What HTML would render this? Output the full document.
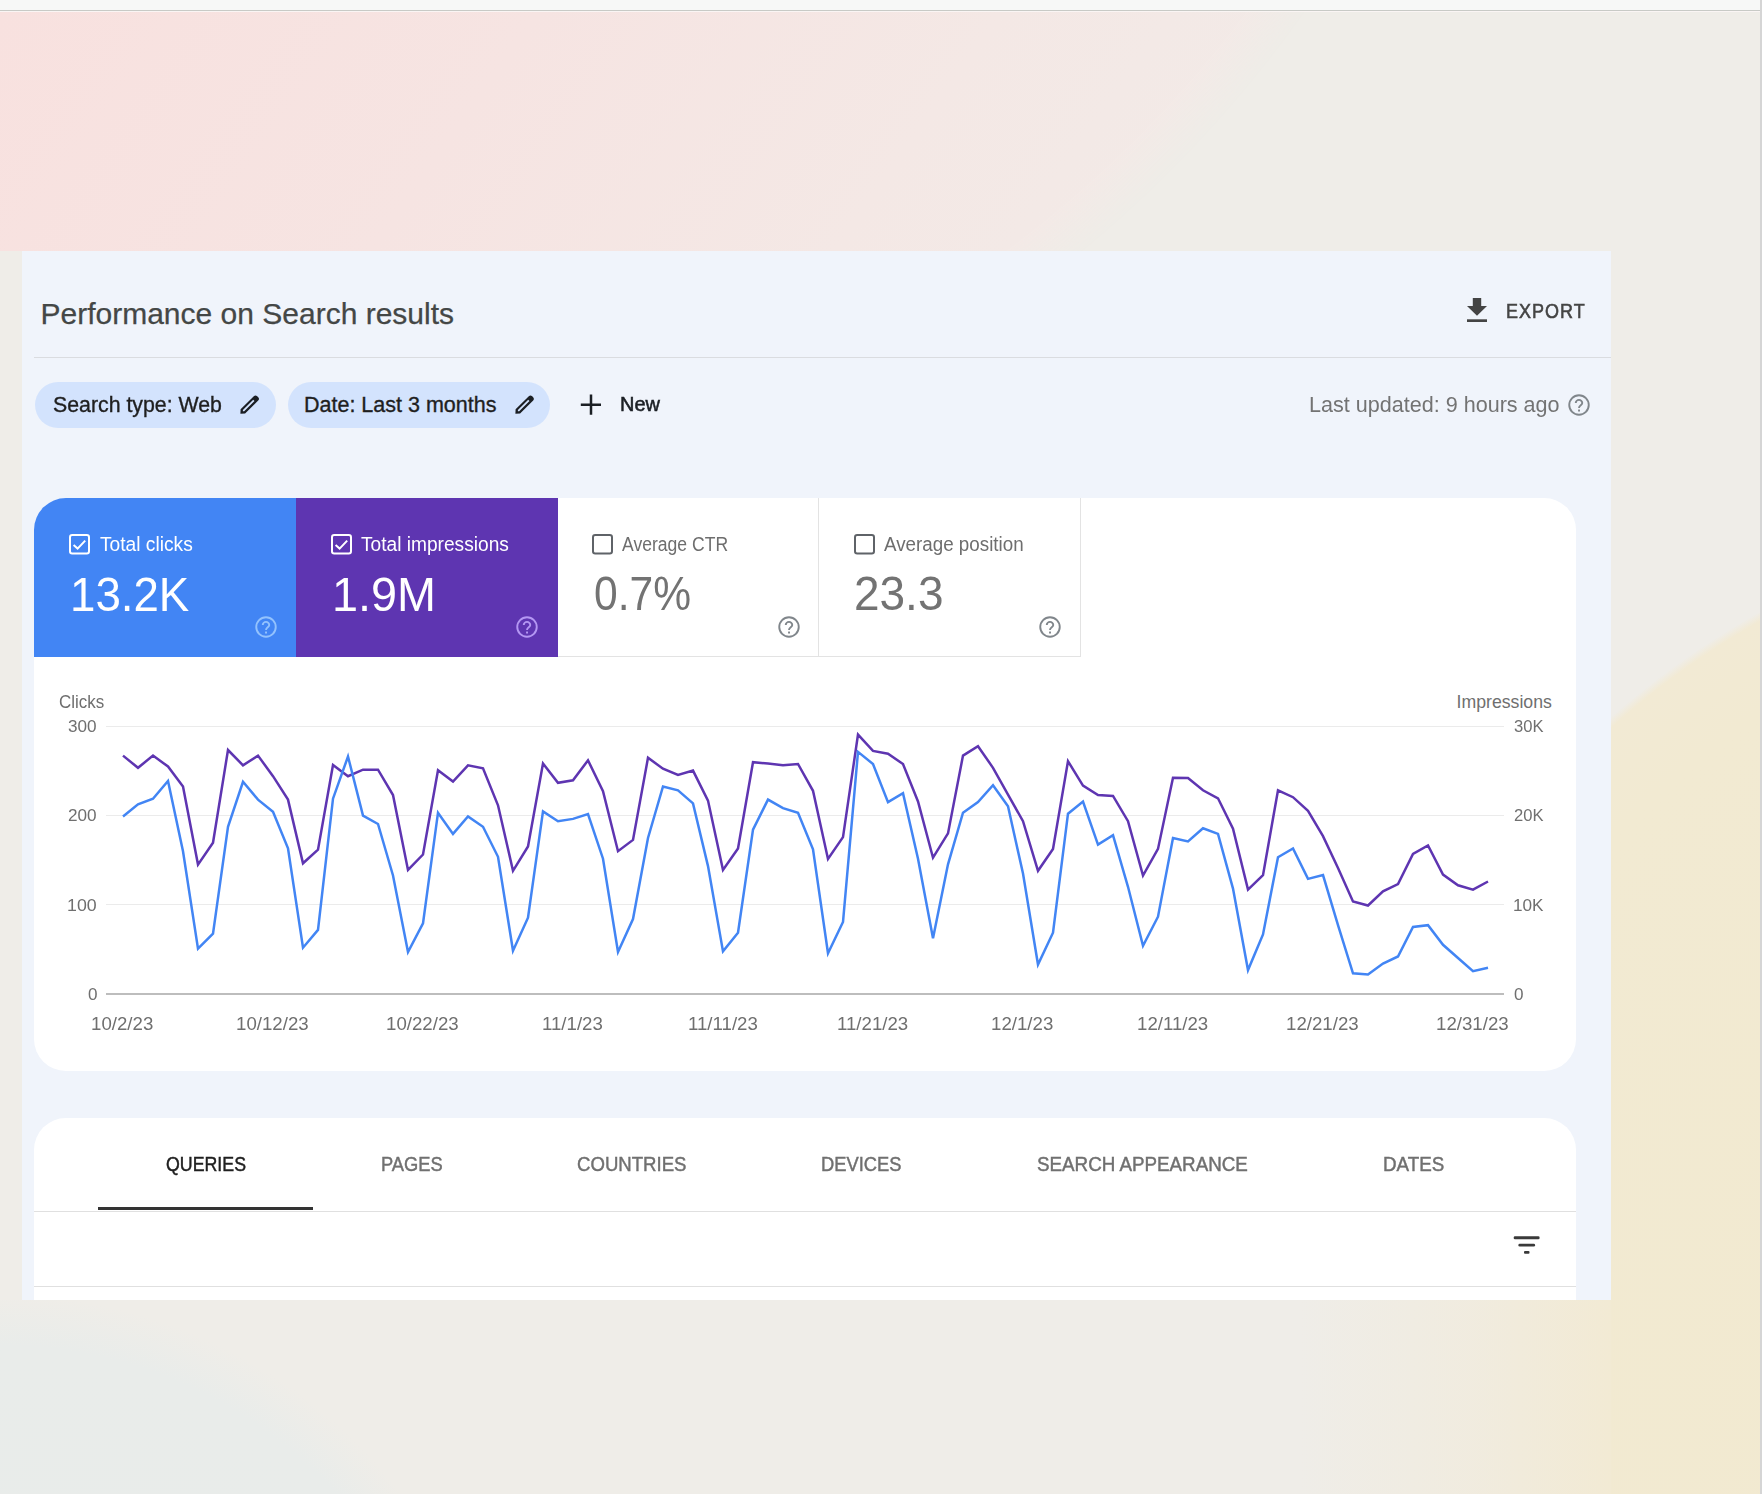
<!DOCTYPE html>
<html><head><meta charset="utf-8">
<style>
*{box-sizing:border-box;margin:0;padding:0}
html,body{width:1762px;height:1494px;overflow:hidden}
body{position:relative;background:#efede8;font-family:"Liberation Sans",sans-serif;}
.a{position:absolute}
.t{position:absolute;white-space:nowrap;line-height:1}
#topbar{left:0;top:0;width:1762px;height:12px;background:#f7f8f7;border-bottom:1px solid #faf5f4}
#tline{left:0;top:10px;width:1762px;height:1px;background:#c8cac6}
#rline{left:1760px;top:0;width:2px;height:1494px;background:#d5d5d5}
#pink{left:0;top:12px;width:1760px;height:239px;background:linear-gradient(125deg,#f8e1df 0%,#f6e4e2 28%,#f4e8e5 52%,#f2eae7 70%,#f0ece8 100%);-webkit-mask-image:radial-gradient(circle 1232px at 300px -711px,#000 96%,transparent 100%);mask-image:radial-gradient(circle 1232px at 300px -711px,#000 96%,transparent 100%)}
#yellow{left:1611px;top:251px;width:149px;height:1243px;background:radial-gradient(circle 854px at 564px 1107px,#f2e9cf 0%,#f2ead2 90%,#f2ead4 99%,rgba(239,237,232,0) 100%)}
#yellow2{left:1300px;top:1300px;width:311px;height:194px;background:linear-gradient(90deg,rgba(243,234,211,0) 0%,rgba(242,234,214,0.5) 55%,#f2ead4 100%)}
#blue{left:0;top:1300px;width:600px;height:194px;background:radial-gradient(circle 505px at 0px 500px,#e8ecea 0%,#e9ecea 90%,rgba(239,237,232,0) 100%)}
#panel{left:22px;top:251px;width:1589px;height:1049px;background:#f0f4fb;overflow:hidden}
.card{background:#fff;border-radius:32px;overflow:hidden}
.chip{background:#d3e3fd;border-radius:23px;height:46px}
.sc{top:0;height:158.5px}
</style></head><body>
<div id="topbar" class="a"></div>
<div id="tline" class="a"></div>
<div id="pink" class="a"></div>
<div id="yellow" class="a"></div>
<div id="yellow2" class="a"></div>
<div id="blue" class="a"></div>
<div id="rline" class="a"></div>

<div id="panel" class="a">
  <svg class="a" style="left:1445px;top:47px" width="20" height="24" viewBox="0 0 20 24"><path d="M5.8 0h8.4v8h5.8l-10 9.8l-10-9.8h5.8z" fill="#444444"/><rect x="0" y="21.3" width="20" height="2.7" fill="#444444"/></svg>
  <div class="a" style="left:12px;top:106px;width:1577px;height:1px;background:#dadce0"></div>
  <div class="a chip" style="left:13px;top:131px;width:241px"></div>
  <div class="a chip" style="left:266px;top:131px;width:262px"></div>
  <div class="a card" style="left:12px;top:247px;width:1542px;height:573px">
    <div class="a sc" style="left:0;width:262px;background:#4285f4"></div>
    <div class="a sc" style="left:262px;width:261.5px;background:#5e35b1"></div>
    <div class="a sc" style="left:523.5px;width:261px;border-right:1px solid #e3e3e3;border-bottom:1px solid #e3e3e3"></div>
    <div class="a sc" style="left:784.5px;width:262px;border-right:1.5px solid #e3e3e3;border-bottom:1px solid #e3e3e3"></div>
  </div>
  <div class="a card" style="left:12px;top:867px;width:1542px;height:300px;border-radius:32px 32px 0 0"></div>
</div>

<svg class="a" style="left:234px;top:390px" width="30" height="30" viewBox="0 0 30 30"><path fill-rule="evenodd" fill="#1b1f24" d="M6.4 23.7L6.6 19.2L19.8 6.2Q21.5 4.6 23.2 6.3L24.2 7.3Q25.8 9 24.2 10.6L11.1 23.6Z M8.9 21.3L8.9 20.1L19.2 9.8L20.5 11.1L10.2 21.3Z"/></svg>
<svg class="a" style="left:509px;top:390px" width="30" height="30" viewBox="0 0 30 30"><path fill-rule="evenodd" fill="#1b1f24" d="M6.4 23.7L6.6 19.2L19.8 6.2Q21.5 4.6 23.2 6.3L24.2 7.3Q25.8 9 24.2 10.6L11.1 23.6Z M8.9 21.3L8.9 20.1L19.2 9.8L20.5 11.1L10.2 21.3Z"/></svg>
<svg class="a" style="left:580px;top:394px" width="22" height="22" viewBox="0 0 22 22"><path d="M11 0.6v20.2M0.8 10.7h20.2" stroke="#1b1f24" stroke-width="2.5"/></svg>
<svg class="a" style="left:1567.2px;top:393.3px" width="24" height="24" viewBox="0 0 24 24"><circle cx="12" cy="12" r="9.75" fill="none" stroke="#80868b" stroke-width="1.9"/><path d="M8.75 10.1A3.25 3.25 0 0 1 15.25 10.1C15.25 12.3 12 12.4 12 15" fill="none" stroke="#80868b" stroke-width="1.9"/><rect x="11.05" y="16.55" width="1.95" height="1.95" fill="#80868b"/></svg>

<svg class="a" style="left:69px;top:534px" width="21" height="21" viewBox="0 0 21 21"><rect x="1" y="1" width="19" height="18.5" rx="2.2" fill="none" stroke="#fff" stroke-width="2"/><path d="M4.6 11 L8.6 14.6 L16.2 6.6" fill="none" stroke="#fff" stroke-width="2"/></svg>
<svg class="a" style="left:253.7px;top:614.7px" width="24" height="24" viewBox="0 0 24 24"><circle cx="12" cy="12" r="9.75" fill="none" stroke="#93c2fd" stroke-width="1.9"/><path d="M8.75 10.1A3.25 3.25 0 0 1 15.25 10.1C15.25 12.3 12 12.4 12 15" fill="none" stroke="#93c2fd" stroke-width="1.9"/><rect x="11.05" y="16.55" width="1.95" height="1.95" fill="#93c2fd"/></svg>
<svg class="a" style="left:331px;top:534px" width="21" height="21" viewBox="0 0 21 21"><rect x="1" y="1" width="19" height="18.5" rx="2.2" fill="none" stroke="#fff" stroke-width="2"/><path d="M4.6 11 L8.6 14.6 L16.2 6.6" fill="none" stroke="#fff" stroke-width="2"/></svg>
<svg class="a" style="left:515.4px;top:614.6px" width="24" height="24" viewBox="0 0 24 24"><circle cx="12" cy="12" r="9.75" fill="none" stroke="#b497f3" stroke-width="1.9"/><path d="M8.75 10.1A3.25 3.25 0 0 1 15.25 10.1C15.25 12.3 12 12.4 12 15" fill="none" stroke="#b497f3" stroke-width="1.9"/><rect x="11.05" y="16.55" width="1.95" height="1.95" fill="#b497f3"/></svg>
<svg class="a" style="left:592px;top:534px" width="21" height="21" viewBox="0 0 21 21"><rect x="1" y="1" width="19" height="18.5" rx="2.2" fill="none" stroke="#5f6368" stroke-width="2"/></svg>
<svg class="a" style="left:777.0px;top:614.7px" width="24" height="24" viewBox="0 0 24 24"><circle cx="12" cy="12" r="9.75" fill="none" stroke="#80868b" stroke-width="1.9"/><path d="M8.75 10.1A3.25 3.25 0 0 1 15.25 10.1C15.25 12.3 12 12.4 12 15" fill="none" stroke="#80868b" stroke-width="1.9"/><rect x="11.05" y="16.55" width="1.95" height="1.95" fill="#80868b"/></svg>
<svg class="a" style="left:854px;top:534px" width="21" height="21" viewBox="0 0 21 21"><rect x="1" y="1" width="19" height="18.5" rx="2.2" fill="none" stroke="#5f6368" stroke-width="2"/></svg>
<svg class="a" style="left:1038.1px;top:614.7px" width="24" height="24" viewBox="0 0 24 24"><circle cx="12" cy="12" r="9.75" fill="none" stroke="#80868b" stroke-width="1.9"/><path d="M8.75 10.1A3.25 3.25 0 0 1 15.25 10.1C15.25 12.3 12 12.4 12 15" fill="none" stroke="#80868b" stroke-width="1.9"/><rect x="11.05" y="16.55" width="1.95" height="1.95" fill="#80868b"/></svg>
<div class="a" style="left:106px;top:725.8px;width:1398px;height:1px;background:#ebebeb"></div>
<div class="a" style="left:106px;top:815.0px;width:1398px;height:1px;background:#ebebeb"></div>
<div class="a" style="left:106px;top:904.2px;width:1398px;height:1px;background:#ebebeb"></div>
<div class="a" style="left:106px;top:993px;width:1398px;height:2px;background:#bdbdbd"></div>
<svg class="a" style="left:0;top:0" width="1762" height="1494">
  <path d="M123.0,755.6 L138.0,767.8 L153.0,755.6 L168.0,766.5 L183.0,786.5 L198.0,864.6 L213.0,842.7 L228.0,750.0 L243.0,765.3 L258.0,755.6 L273.0,776.2 L288.0,799.6 L303.0,863.3 L318.0,849.7 L333.0,765.0 L348.0,776.2 L363.0,769.7 L378.0,769.7 L393.0,795.0 L408.0,869.9 L423.0,854.5 L438.0,770.2 L453.0,781.5 L468.0,765.3 L483.0,768.3 L498.0,805.3 L513.0,870.8 L528.0,846.5 L543.0,763.5 L558.0,782.8 L573.0,780.3 L588.0,760.3 L603.0,791.2 L618.0,851.2 L633.0,839.9 L648.0,757.8 L663.0,768.7 L678.0,774.9 L693.0,770.6 L708.0,800.6 L723.0,869.9 L738.0,848.4 L753.0,762.2 L768.0,763.5 L783.0,765.3 L798.0,764.0 L813.0,790.8 L828.0,859.0 L843.0,837.1 L858.0,734.6 L873.0,750.9 L888.0,753.7 L903.0,764.0 L918.0,801.5 L933.0,857.7 L948.0,833.4 L963.0,755.6 L978.0,746.2 L993.0,767.8 L1008.0,794.6 L1023.0,821.2 L1038.0,870.8 L1053.0,848.9 L1068.0,761.2 L1083.0,785.6 L1098.0,795.0 L1113.0,795.9 L1128.0,821.2 L1143.0,875.5 L1158.0,848.9 L1173.0,777.7 L1188.0,778.1 L1203.0,790.3 L1218.0,798.3 L1233.0,828.7 L1248.0,889.6 L1263.0,875.1 L1278.0,790.3 L1293.0,797.2 L1308.0,810.9 L1323.0,836.2 L1338.0,868.0 L1353.0,901.4 L1368.0,905.5 L1383.0,891.4 L1398.0,884.0 L1413.0,854.0 L1428.0,845.5 L1443.0,874.6 L1458.0,885.3 L1473.0,889.6 L1488.0,881.5" fill="none" stroke="#5e35b1" stroke-width="2.5" stroke-linejoin="miter"/>
  <path d="M123.0,816.5 L138.0,804.3 L153.0,798.7 L168.0,780.9 L183.0,851.2 L198.0,948.6 L213.0,933.6 L228.0,826.8 L243.0,781.8 L258.0,799.6 L273.0,811.8 L288.0,848.4 L303.0,947.7 L318.0,929.9 L333.0,798.7 L348.0,756.5 L363.0,815.6 L378.0,824.0 L393.0,875.5 L408.0,952.0 L423.0,923.3 L438.0,812.7 L453.0,833.9 L468.0,816.5 L483.0,826.8 L498.0,856.8 L513.0,950.8 L528.0,917.7 L543.0,811.4 L558.0,821.2 L573.0,818.9 L588.0,814.1 L603.0,858.7 L618.0,952.0 L633.0,919.0 L648.0,838.0 L663.0,786.5 L678.0,790.3 L693.0,803.4 L708.0,866.1 L723.0,951.4 L738.0,932.7 L753.0,829.6 L768.0,799.6 L783.0,808.1 L798.0,812.7 L813.0,849.3 L828.0,953.3 L843.0,922.0 L858.0,751.9 L873.0,764.0 L888.0,802.1 L903.0,793.1 L918.0,858.7 L933.0,938.3 L948.0,864.3 L963.0,812.7 L978.0,802.1 L993.0,785.2 L1008.0,806.2 L1023.0,873.6 L1038.0,964.5 L1053.0,932.7 L1068.0,813.7 L1083.0,801.5 L1098.0,844.6 L1113.0,835.2 L1128.0,886.8 L1143.0,945.8 L1158.0,916.7 L1173.0,838.0 L1188.0,841.4 L1203.0,828.3 L1218.0,833.9 L1233.0,888.6 L1248.0,970.1 L1263.0,934.5 L1278.0,857.2 L1293.0,848.4 L1308.0,878.9 L1323.0,875.1 L1338.0,925.2 L1353.0,973.3 L1368.0,974.5 L1383.0,963.6 L1398.0,956.5 L1413.0,927.0 L1428.0,925.2 L1443.0,944.8 L1458.0,958.0 L1473.0,971.1 L1488.0,967.7" fill="none" stroke="#4285f4" stroke-width="2.5" stroke-linejoin="miter"/>
</svg>
<div class="a" style="left:98px;top:1207px;width:215px;height:3px;background:#333333"></div>
<div class="a" style="left:34px;top:1211px;width:1542px;height:1px;background:#e0e0e0"></div>
<div class="a" style="left:34px;top:1286px;width:1542px;height:1px;background:#e0e0e0"></div>
<svg class="a" style="left:1510px;top:1230px" width="34" height="28" viewBox="0 0 34 28"><rect x="3.7" y="6.2" width="25.9" height="3" rx="1.3" fill="#3a3a3a"/><rect x="8.4" y="13.7" width="16.7" height="2.9" rx="1.3" fill="#3a3a3a"/><rect x="14" y="21" width="5.5" height="2.7" rx="1" fill="#3a3a3a"/></svg>
<div class="t" style="left:40.50px;top:298.50px;font-size:30px;font-weight:400;color:#444746;-webkit-text-stroke:0.25px currentColor;">Performance on Search results</div>
<div class="t" style="left:1506.14px;top:300.00px;font-size:21px;font-weight:400;color:#444444;transform:scaleX(0.8558);transform-origin:0 0;-webkit-text-stroke:0.6px currentColor;letter-spacing:1.2px;">EXPORT</div>
<div class="t" style="left:53.00px;top:394.50px;font-size:21.5px;font-weight:400;color:#1f1f1f;transform:scaleX(0.9910);transform-origin:0 0;-webkit-text-stroke:0.35px currentColor;">Search type: Web</div>
<div class="t" style="left:304.00px;top:394.50px;font-size:21.5px;font-weight:400;color:#1f1f1f;-webkit-text-stroke:0.35px currentColor;">Date: Last 3 months</div>
<div class="t" style="left:620.43px;top:394.40px;font-size:20.5px;font-weight:400;color:#1b1f24;transform:scaleX(0.9725);transform-origin:0 0;-webkit-text-stroke:0.55px currentColor;">New</div>
<div class="t" style="left:1308.62px;top:394.20px;font-size:22px;font-weight:400;color:#737373;transform:scaleX(0.9803);transform-origin:0 0;">Last updated: 9 hours ago</div>
<div class="t" style="left:99.70px;top:534.80px;font-size:19.5px;font-weight:400;color:#ffffff;transform:scaleX(0.9839);transform-origin:0 0;">Total clicks</div>
<div class="t" style="left:69.85px;top:570.80px;font-size:48px;font-weight:400;color:#ffffff;transform:scaleX(0.9508);transform-origin:0 0;">13.2K</div>
<div class="t" style="left:360.80px;top:535.10px;font-size:19.5px;font-weight:400;color:#ffffff;transform:scaleX(0.9815);transform-origin:0 0;">Total impressions</div>
<div class="t" style="left:331.68px;top:571.30px;font-size:48px;font-weight:400;color:#ffffff;transform:scaleX(0.9749);transform-origin:0 0;">1.9M</div>
<div class="t" style="left:622.20px;top:534.90px;font-size:19.5px;font-weight:400;color:#6e6e6e;transform:scaleX(0.9007);transform-origin:0 0;">Average CTR</div>
<div class="t" style="left:593.71px;top:570.10px;font-size:48px;font-weight:400;color:#737373;transform:scaleX(0.8864);transform-origin:0 0;">0.7%</div>
<div class="t" style="left:883.70px;top:534.90px;font-size:19.5px;font-weight:400;color:#6e6e6e;transform:scaleX(0.9635);transform-origin:0 0;">Average position</div>
<div class="t" style="left:854.09px;top:570.10px;font-size:48px;font-weight:400;color:#737373;transform:scaleX(0.9574);transform-origin:0 0;">23.3</div>
<div class="t" style="left:58.50px;top:693.50px;font-size:17.7px;font-weight:400;color:#6f6f6f;transform:scaleX(0.9594);transform-origin:0 0;">Clicks</div>
<div class="t" style="left:1456.50px;top:694.00px;font-size:17.7px;font-weight:400;color:#6f6f6f;">Impressions</div>
<div class="t" style="left:68.20px;top:718.10px;font-size:17.3px;font-weight:400;color:#6f6f6f;transform:scaleX(0.9921);transform-origin:0 0;">300</div>
<div class="t" style="left:68.20px;top:807.30px;font-size:17.3px;font-weight:400;color:#6f6f6f;transform:scaleX(0.9921);transform-origin:0 0;">200</div>
<div class="t" style="left:67.17px;top:896.50px;font-size:17.3px;font-weight:400;color:#6f6f6f;transform:scaleX(1.0286);transform-origin:0 0;">100</div>
<div class="t" style="left:87.60px;top:985.70px;font-size:17.3px;font-weight:400;color:#6f6f6f;transform:scaleX(0.9889);transform-origin:0 0;">0</div>
<div class="t" style="left:1514.00px;top:718.10px;font-size:17.3px;font-weight:400;color:#6f6f6f;transform:scaleX(0.9609);transform-origin:0 0;">30K</div>
<div class="t" style="left:1514.00px;top:807.30px;font-size:17.3px;font-weight:400;color:#6f6f6f;transform:scaleX(0.9609);transform-origin:0 0;">20K</div>
<div class="t" style="left:1513.01px;top:896.50px;font-size:17.3px;font-weight:400;color:#6f6f6f;transform:scaleX(0.9927);transform-origin:0 0;">10K</div>
<div class="t" style="left:1514.00px;top:985.70px;font-size:17.3px;font-weight:400;color:#6f6f6f;transform:scaleX(0.9889);transform-origin:0 0;">0</div>
<div class="t" style="left:91.46px;top:1015.60px;font-size:17.7px;font-weight:400;color:#6f6f6f;transform:scaleX(1.0550);transform-origin:0 0;">10/2/23</div>
<div class="t" style="left:236.27px;top:1015.60px;font-size:17.7px;font-weight:400;color:#6f6f6f;transform:scaleX(1.0550);transform-origin:0 0;">10/12/23</div>
<div class="t" style="left:386.27px;top:1015.60px;font-size:17.7px;font-weight:400;color:#6f6f6f;transform:scaleX(1.0550);transform-origin:0 0;">10/22/23</div>
<div class="t" style="left:542.15px;top:1015.60px;font-size:17.7px;font-weight:400;color:#6f6f6f;transform:scaleX(1.0550);transform-origin:0 0;">11/1/23</div>
<div class="t" style="left:687.65px;top:1015.60px;font-size:17.7px;font-weight:400;color:#6f6f6f;transform:scaleX(1.0550);transform-origin:0 0;">11/11/23</div>
<div class="t" style="left:836.96px;top:1015.60px;font-size:17.7px;font-weight:400;color:#6f6f6f;transform:scaleX(1.0550);transform-origin:0 0;">11/21/23</div>
<div class="t" style="left:991.46px;top:1015.60px;font-size:17.7px;font-weight:400;color:#6f6f6f;transform:scaleX(1.0550);transform-origin:0 0;">12/1/23</div>
<div class="t" style="left:1136.96px;top:1015.60px;font-size:17.7px;font-weight:400;color:#6f6f6f;transform:scaleX(1.0550);transform-origin:0 0;">12/11/23</div>
<div class="t" style="left:1286.27px;top:1015.60px;font-size:17.7px;font-weight:400;color:#6f6f6f;transform:scaleX(1.0550);transform-origin:0 0;">12/21/23</div>
<div class="t" style="left:1436.27px;top:1015.60px;font-size:17.7px;font-weight:400;color:#6f6f6f;transform:scaleX(1.0550);transform-origin:0 0;">12/31/23</div>
<div class="t" style="left:166.40px;top:1153.80px;font-size:20px;font-weight:400;color:#202020;transform:scaleX(0.8887);transform-origin:0 0;-webkit-text-stroke:0.45px currentColor;">QUERIES</div>
<div class="t" style="left:381.28px;top:1153.80px;font-size:20px;font-weight:400;color:#707070;transform:scaleX(0.9154);transform-origin:0 0;-webkit-text-stroke:0.45px currentColor;">PAGES</div>
<div class="t" style="left:577.37px;top:1153.80px;font-size:20px;font-weight:400;color:#707070;transform:scaleX(0.9292);transform-origin:0 0;-webkit-text-stroke:0.45px currentColor;">COUNTRIES</div>
<div class="t" style="left:821.28px;top:1153.80px;font-size:20px;font-weight:400;color:#707070;transform:scaleX(0.9160);transform-origin:0 0;-webkit-text-stroke:0.45px currentColor;">DEVICES</div>
<div class="t" style="left:1037.00px;top:1153.80px;font-size:20px;font-weight:400;color:#707070;transform:scaleX(0.9393);transform-origin:0 0;-webkit-text-stroke:0.45px currentColor;">SEARCH APPEARANCE</div>
<div class="t" style="left:1383.46px;top:1153.80px;font-size:20px;font-weight:400;color:#707070;transform:scaleX(0.9396);transform-origin:0 0;-webkit-text-stroke:0.45px currentColor;">DATES</div>
</body></html>
